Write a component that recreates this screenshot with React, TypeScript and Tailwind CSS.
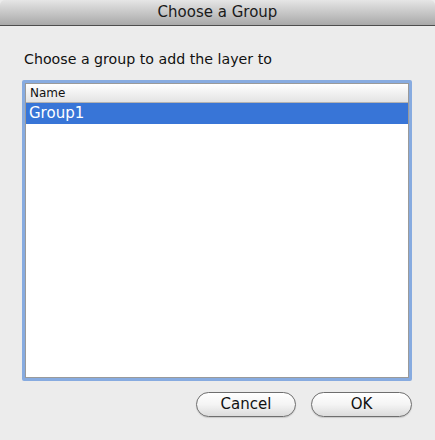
export default function App() {
  return (
    <div className="flex h-[440px] w-[435px] flex-col bg-[#ececec] font-['DejaVu_Sans',sans-serif] text-[#111]">
      <div className="flex h-[26px] shrink-0 items-center justify-center rounded-t-[5px] border-b border-[#4d4d4d] bg-gradient-to-b from-[#e6e6e6] to-[#a9a9a9] text-[15px] text-[#1a1a1a]">
        Choose a Group
      </div>
      <div className="flex flex-1 flex-col px-[22px] pt-[24px]">
        <div className="pl-[2px] text-[14.2px] leading-[19px]">Choose a group to add the layer to</div>
        <div className="mt-[11px] h-[301px] w-[390px] rounded-[2px] border-[3px] border-[#87abe0] bg-white">
          <div className="h-full w-full border border-[#9a9a9a]">
            <div className="flex h-[19px] items-center border-b border-[#b2b2b2] bg-gradient-to-b from-white to-[#e3e3e3] pl-[4px] text-[12px]">
              Name
            </div>
            <div className="flex h-[21px] items-center bg-[#3875d7] pl-[3px] text-[15px] text-white">Group1</div>
          </div>
        </div>
        <div className="mt-[11px] flex justify-end gap-[15px] pr-[1px]">
          <button className="h-[25px] w-[100px] rounded-full border border-[#6e6e6e] bg-gradient-to-b from-white via-[#f4f4f4] to-[#dcdcdc] text-[15px] text-[#111] shadow-[0_1px_1px_rgba(0,0,0,0.15)]">
            Cancel
          </button>
          <button className="h-[25px] w-[101px] rounded-full border border-[#6e6e6e] bg-gradient-to-b from-white via-[#f4f4f4] to-[#dcdcdc] text-[15px] text-[#111] shadow-[0_1px_1px_rgba(0,0,0,0.15)]">
            OK
          </button>
        </div>
      </div>
    </div>
  );
}
